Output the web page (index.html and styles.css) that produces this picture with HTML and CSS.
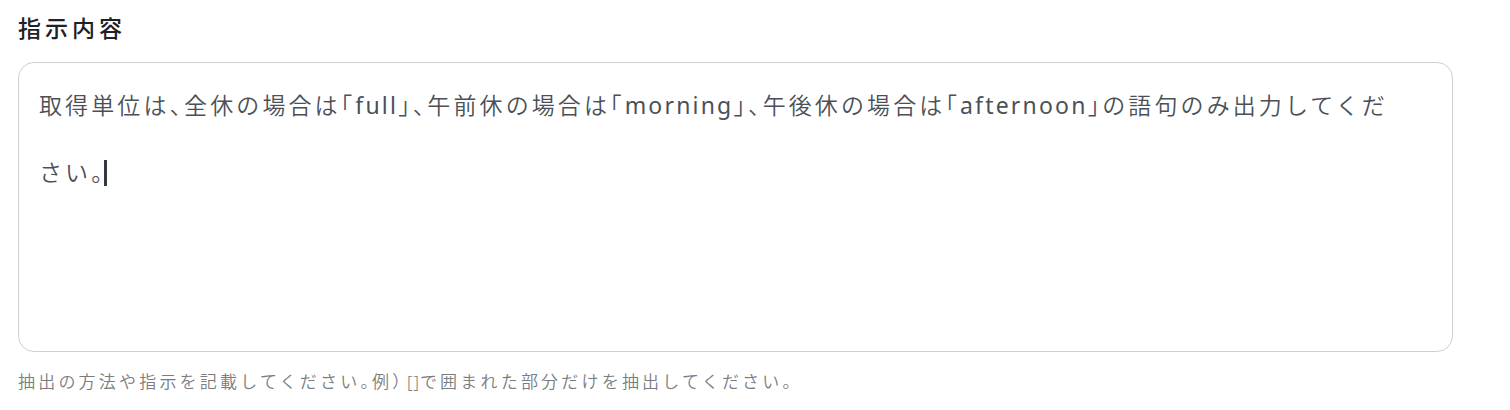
FILE: index.html
```html
<!DOCTYPE html>
<html lang="ja">
<head>
<meta charset="utf-8">
<link rel="stylesheet" href="styles.css">
</head>
<body>
<div class="field">
  <label class="label">指示内容</label>
  <div class="box">
    <p class="content">取得単位は<span class="hw">、</span>全休の場合は<span class="hw">「</span><span class="en">full</span><span class="hw">」、</span>午前休の場合は<span class="hw">「</span><span class="en">morning</span><span class="hw">」、</span>午後休の場合は<span class="hw">「</span><span class="en">afternoon</span><span class="hw">」</span>の語句のみ出力してください<span class="hw">。</span><span class="caret"></span></p>
  </div>
  <p class="help">抽出の方法や指示を記載してください<span class="hw">。</span>例<span class="hw">）</span><span class="en">[]</span>で囲まれた部分だけを抽出してください<span class="hw">。</span></p>
</div>
</body>
</html>
```
FILE: styles.css
```css
html, body {
  margin: 0;
  padding: 0;
  background: #ffffff;
}
body {
  font-family: "Noto Sans", "Noto Sans CJK JP", sans-serif;
}
.field {
  padding: 11px 57px 0 18px;
  display: flex;
  flex-direction: column;
}
.label {
  font-family: "Noto Sans CJK JP", sans-serif;
  font-size: 23px;
  line-height: 32px;
  color: #1f2124;
  font-weight: 500;
  letter-spacing: 4px;
}
.box {
  margin-top: 19px;
  height: 290px;
  border: 1.5px solid #cfcfcf;
  border-radius: 16px;
  padding: 9px 52px 0 20px;
  box-sizing: border-box;
}
.content {
  margin: 0;
  font-size: 23px;
  line-height: 67px;
  color: #4b5058;
  letter-spacing: 3.1px;
  font-weight: 350;
}
.hw {
  font-feature-settings: "halt";
}
.en {
  font-weight: 400;
  letter-spacing: 2.2px;
}
.caret {
  display: inline-block;
  width: 3px;
  height: 26px;
  background: #353a42;
  vertical-align: -5px;
  margin-left: -2px;
}
.help {
  margin: 18px 0 0;
  font-size: 17px;
  line-height: 24px;
  color: #7a7d80;
  letter-spacing: 3.2px;
  font-weight: 350;
}
.help .en {
  font-weight: 350;
  letter-spacing: 1px;
  margin-left: 3px;
}
```
